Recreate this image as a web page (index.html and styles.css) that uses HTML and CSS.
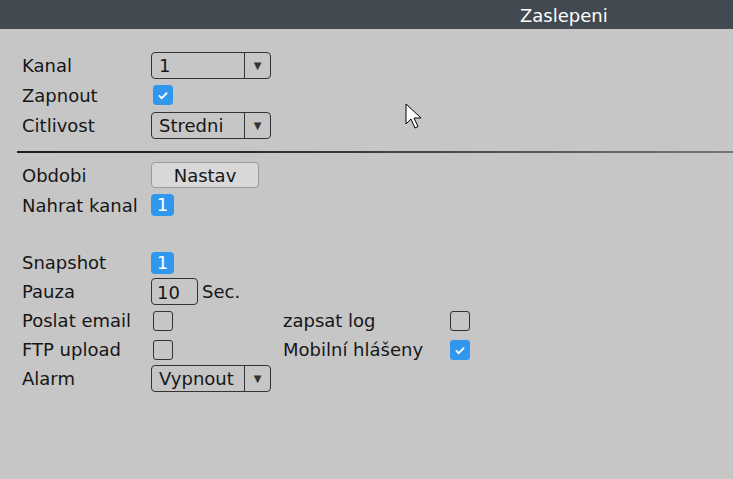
FILE: index.html
```html
<!DOCTYPE html>
<html lang="cs">
<head>
  <meta charset="utf-8">
  <title>Zaslepeni</title>
  <link rel="stylesheet" href="styles.css">
</head>
<body>
  <div class="titlebar">Zaslepeni</div>

  <div class="panel">
    <div class="rows top">
      <div class="row">
        <span class="lbl">Kanal</span>
        <div class="select"><span class="val">1</span><span class="arrow">&#9660;</span></div>
      </div>
      <div class="row">
        <span class="lbl">Zapnout</span>
        <span class="check on"><svg viewBox="0 0 20 20"><path d="M5.5 10.5l3 3 6-6" fill="none" stroke="#fff" stroke-width="2"/></svg></span>
      </div>
      <div class="row">
        <span class="lbl">Citlivost</span>
        <div class="select"><span class="val">Stredni</span><span class="arrow">&#9660;</span></div>
      </div>
    </div>

    <div class="divider"></div>

    <div class="rows mid">
      <div class="row">
        <span class="lbl">Obdobi</span>
        <button class="btn">Nastav</button>
      </div>
      <div class="row">
        <span class="lbl">Nahrat kanal</span>
        <span class="badge">1</span>
      </div>
      <div class="row"></div>
    </div>

    <div class="rows low">
      <div class="row">
        <span class="lbl">Snapshot</span>
        <span class="badge">1</span>
      </div>
      <div class="row">
        <span class="lbl">Pauza</span>
        <div class="num">10</div>
        <span class="unit">Sec.</span>
      </div>
      <div class="row">
        <span class="lbl">Poslat email</span>
        <span class="check"></span>
        <span class="lbl2">zapsat log</span>
        <span class="check"></span>
      </div>
      <div class="row">
        <span class="lbl">FTP upload</span>
        <span class="check"></span>
        <span class="lbl2">Mobilní hlášeny</span>
        <span class="check on"><svg viewBox="0 0 20 20"><path d="M5.5 10.5l3 3 6-6" fill="none" stroke="#fff" stroke-width="2"/></svg></span>
      </div>
      <div class="row">
        <span class="lbl">Alarm</span>
        <div class="select"><span class="val">Vypnout</span><span class="arrow">&#9660;</span></div>
      </div>
    </div>
  </div>

  <svg class="cursor" width="16" height="28" viewBox="0 0 16 28">
    <path d="M1 1v20l5-5 4 9 3-1.5-4-8.5h7z" fill="#fff" stroke="#000" stroke-width="1"/>
  </svg>
</body>
</html>
```

FILE: styles.css
```css
/* --- page --- */
*{box-sizing:border-box}
body{margin:0;width:733px;height:479px;overflow:hidden;background:#c6c6c6;font-family:"DejaVu Sans",sans-serif;font-size:18px;color:#161616;position:relative}
.titlebar{height:29px;background:#424950;color:#fff;padding-left:520px;line-height:32px;font-size:18px}

/* --- form --- */
.panel{padding:21px 0 0 22px}
.rows .row{display:flex;align-items:center;height:30px}
.rows.low .row{height:29px}
.rows.mid .row:last-child{height:28px}
.lbl{width:129px;flex:none}
.lbl2{width:165px;flex:none;margin-left:110px}
.divider{height:2px;margin:11px 0 7px -5px;background:linear-gradient(90deg,#1e1e1e 0%,#2a2a2a 30%,#444 55%,#777 100%)}

.select{width:120px;height:27px;border:1px solid #333;border-radius:4px;display:flex;align-items:center}
.select .val{flex:1;padding-left:7px;line-height:25px}
.select .arrow{width:26px;height:100%;border-left:1px solid #333;font-size:10px;display:flex;align-items:center;justify-content:center;color:#333}

.check{width:20px;height:20px;border:1px solid #333;border-radius:3px;margin-left:2px;display:inline-block}
.check.on{background:#2f97ee;border-color:#2f97ee}
.check svg{display:block;width:18px;height:18px}

.badge{width:23px;height:22px;border-radius:4px;background:#2f97ee;color:#fff;text-align:center;line-height:22px}

.btn{width:108px;height:26px;border:1px solid #9a9a9a;border-radius:4px;background:#d8d8d8;font:inherit;color:#161616;padding:0}

.num{width:47px;height:27px;border:1px solid #333;border-radius:4px;padding-left:5px;line-height:27px}
.unit{margin-left:4px}

/* --- pointer --- */
.cursor{position:absolute;left:405px;top:103px}
```
